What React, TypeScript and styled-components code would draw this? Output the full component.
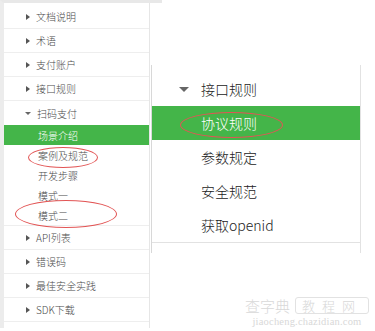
import styled, { createGlobalStyle } from "styled-components";

const GlobalStyle = createGlobalStyle`
  html, body {
    margin: 0;
    padding: 0;
    background: #ffffff;
  }
  body {
    font-family: "Noto Sans CJK SC", "Noto Sans", sans-serif;
  }
`;

const Page = styled.div`
  position: relative;
  display: flex;
  align-items: flex-start;
  width: 375px;
  height: 331px;
  overflow: hidden;
`;

const LeftPanel = styled.div`
  position: relative;
  width: 150px;
  height: 328px;
  padding-top: 2px;
  box-sizing: border-box;
  border-top: 3px solid #e8e8e8;
  border-left: 4px solid #ececec;
  border-right: 1px solid #e6e6e6;
  &::after {
    content: "";
    position: absolute;
    top: -3px;
    left: 100%;
    width: 13px;
    height: 3px;
    background: #e8e8e8;
  }
`;

const NavRow = styled.div<{ $sub?: boolean; $active?: boolean; $last?: boolean }>`
  display: flex;
  align-items: center;
  height: ${(p) => (p.$sub ? "20px" : "24px")};
  box-sizing: border-box;
  padding-left: ${(p) => (p.$sub ? "34px" : "22px")};
  border-bottom: ${(p) => (p.$sub || p.$last ? "none" : "1px solid #eeeeee")};
  background: ${(p) => (p.$active ? "#44b549" : "transparent")};
  color: ${(p) => (p.$active ? "#ffffff" : "#4a4a4a")};
  font-size: 10px;
  font-weight: 300;
  white-space: nowrap;
`;

const Group = styled.div`
  border-bottom: 1px solid #eeeeee;
`;

const Arrow = styled.span<{ $open?: boolean; $big?: boolean }>`
  display: inline-block;
  width: 0;
  height: 0;
  margin-right: ${(p) => (p.$big ? "12px" : "6px")};
  margin-left: ${(p) => (p.$open && !p.$big ? "-1px" : "0")};
  ${(p) =>
    p.$open
      ? `border-left: ${p.$big ? 5.5 : 3.5}px solid transparent;
         border-right: ${p.$big ? 5.5 : 3.5}px solid transparent;
         border-top: ${p.$big ? 5 : 3.5}px solid #666;`
      : `border-top: 3px solid transparent;
         border-bottom: 3px solid transparent;
         border-left: 4px solid #555;`}
`;

const RightPanel = styled.div`
  margin-top: 65px;
  margin-left: 1px;
  width: 210px;
  padding-top: 7px;
  padding-bottom: 10px;
  box-sizing: border-box;
  border-left: 1px solid #d8d8d8;
  border-right: 1px solid #e2e2e2;
`;

const MenuItem = styled.div<{ $head?: boolean; $active?: boolean }>`
  display: flex;
  align-items: center;
  height: 34px;
  padding-left: ${(p) => (p.$head ? "27px" : "49px")};
  background: ${(p) => (p.$active ? "#44b549" : "transparent")};
  color: ${(p) => (p.$active ? "#ffffff" : "#222222")};
  font-size: 14px;
  font-weight: 300;
`;

const MenuList = styled.div`
  border-bottom: 1px solid #e2e2e2;
`;

const Circle = styled.div`
  position: absolute;
  border: 1px solid #e25555;
  border-radius: 50%;
  box-sizing: border-box;
  pointer-events: none;
`;

const Watermark = styled.div`
  position: absolute;
  right: 6px;
  bottom: 4px;
  display: flex;
  flex-direction: column;
  align-items: center;
  color: #d8d8d8;
  line-height: 1;
`;

const MarkTop = styled.div`
  display: flex;
  align-items: center;
  gap: 5px;
  font-size: 15px;
  font-weight: 300;
`;

const MarkBox = styled.span`
  border: 1px solid #e2e2e2;
  border-radius: 3px;
  padding: 1px 6px;
  font-size: 13px;
  letter-spacing: 7px;
`;

const MarkUrl = styled.div`
  margin-top: 3px;
  font-family: "Liberation Serif", serif;
  font-size: 10.5px;
  letter-spacing: 0.2px;
`;

const topItems = ["文档说明", "术语", "支付账户", "接口规则"];
const subItems = ["场景介绍", "案例及规范", "开发步骤", "模式一", "模式二"];
const bottomItems = ["API列表", "错误码", "最佳安全实践", "SDK下载"];
const rightItems = ["协议规则", "参数规定", "安全规范", "获取openid"];

export default function App() {
  return (
    <Page>
      <GlobalStyle />
      <LeftPanel>
        {topItems.map((t) => (
          <NavRow key={t}>
            <Arrow />
            {t}
          </NavRow>
        ))}
        <Group>
          <NavRow $last>
            <Arrow $open />
            扫码支付
          </NavRow>
          {subItems.map((t, i) => (
            <NavRow key={t} $sub $active={i === 0}>
              {t}
            </NavRow>
          ))}
        </Group>
        {bottomItems.map((t) => (
          <NavRow key={t}>
            <Arrow />
            {t}
          </NavRow>
        ))}
      </LeftPanel>

      <RightPanel>
        <MenuList>
          <MenuItem $head>
            <Arrow $open $big />
            接口规则
          </MenuItem>
          {rightItems.map((t, i) => (
            <MenuItem key={t} $active={i === 0}>
              {t}
            </MenuItem>
          ))}
        </MenuList>
      </RightPanel>

      <Circle style={{ left: 180, top: 112, width: 103, height: 26 }} />
      <Circle style={{ left: 28, top: 147, width: 70, height: 21 }} />
      <Circle style={{ left: 15, top: 200, width: 102, height: 28 }} />

      <Watermark>
        <MarkTop>
          查字典<MarkBox>教程网</MarkBox>
        </MarkTop>
        <MarkUrl>jiaocheng.chazidian.com</MarkUrl>
      </Watermark>
    </Page>
  );
}
